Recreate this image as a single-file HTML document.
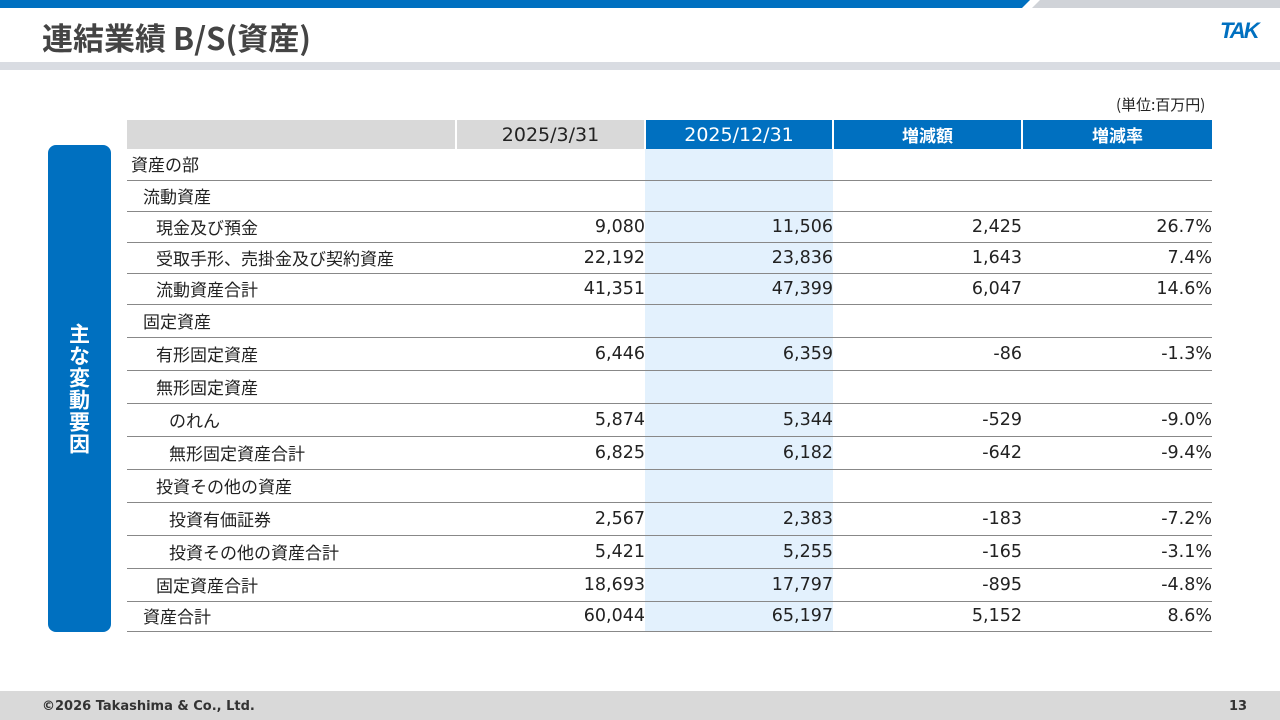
<!DOCTYPE html><html><head><meta charset="utf-8"><style>
body{margin:0;width:1280px;height:720px;position:relative;background:#fff;font-family:"DejaVu Sans","Noto Sans CJK JP",sans-serif;overflow:hidden;color:#222}
.abs{position:absolute}
table{position:absolute;left:127px;top:120px;border-collapse:collapse;width:1085px;font-size:17.5px}
td{padding:0;height:31px;border-bottom:1px solid #888;text-align:right;line-height:20px;white-space:nowrap;box-sizing:border-box}
td.l{text-align:left;font-family:"Noto Sans CJK JP",sans-serif;font-size:17px}
td.h{border-bottom:none;background:#d9d9d9;text-align:center;font-size:19px;height:29px}
td.b{background:#0070c0;color:#fff;text-align:center;font-size:17px;border-bottom:none;border-left:2px solid #fff;font-weight:bold;font-family:"Noto Sans CJK JP",sans-serif;height:29px}
td.c2{background:#e3f1fd}
tr.t td{height:33px}
tr.z td{height:30px}
</style></head><body>
<svg class="abs" style="left:0;top:0" width="1280" height="8"><polygon points="0,0 1030,0 1022,8 0,8" fill="#0070c0"/><polygon points="1032,8 1040,0 1280,0 1280,8" fill="#d0d3d8"/></svg>
<div class="abs" style="left:42px;top:16px;font-size:31px;font-weight:bold;color:#444;font-family:'Noto Sans CJK JP',sans-serif;line-height:42px">連結業績 B/S(資産)</div>
<div class="abs" style="left:1220px;top:18px;font-size:22px;font-style:italic;font-weight:bold;color:#0070c0;letter-spacing:-2px;font-family:'Liberation Sans',sans-serif">TAK</div>
<div class="abs" style="left:0;top:62px;width:1280px;height:8px;background:#d9dce2"></div>
<div class="abs" style="left:1116px;top:94px;font-size:15px;font-family:'Noto Sans CJK JP',sans-serif">(単位:百万円)</div>
<div class="abs" style="left:48px;top:145px;width:63px;height:487px;background:#0070c0;border-radius:8px;color:#fff;font-weight:bold;font-size:21px;writing-mode:vertical-rl;display:flex;align-items:center;justify-content:center;letter-spacing:1px;font-family:'Noto Sans CJK JP',sans-serif">主な変動要因</div>
<table>
<colgroup><col style="width:329px"><col style="width:189px"><col style="width:188px"><col style="width:189px"><col style="width:190px"></colgroup>
<tr><td class="h"></td><td class="h" style="border-left:2px solid #fff">2025/3/31</td><td class="b" style="font-size:19px;font-weight:normal;font-family:'DejaVu Sans',sans-serif">2025/12/31</td><td class="b">増減額</td><td class="b">増減率</td></tr>
<tr><td class="l" style="padding-left:4px">資産の部</td><td></td><td class="c2"></td><td></td><td></td></tr>
<tr><td class="l" style="padding-left:16px">流動資産</td><td></td><td class="c2"></td><td></td><td></td></tr>
<tr><td class="l" style="padding-left:29px">現金及び預金</td><td>9,080</td><td class="c2">11,506</td><td>2,425</td><td>26.7%</td></tr>
<tr><td class="l" style="padding-left:29px">受取手形、売掛金及び契約資産</td><td>22,192</td><td class="c2">23,836</td><td>1,643</td><td>7.4%</td></tr>
<tr><td class="l" style="padding-left:29px">流動資産合計</td><td>41,351</td><td class="c2">47,399</td><td>6,047</td><td>14.6%</td></tr>
<tr class="t"><td class="l" style="padding-left:16px">固定資産</td><td></td><td class="c2"></td><td></td><td></td></tr>
<tr class="t"><td class="l" style="padding-left:29px">有形固定資産</td><td>6,446</td><td class="c2">6,359</td><td>-86</td><td>-1.3%</td></tr>
<tr class="t"><td class="l" style="padding-left:29px">無形固定資産</td><td></td><td class="c2"></td><td></td><td></td></tr>
<tr class="t"><td class="l" style="padding-left:42px">のれん</td><td>5,874</td><td class="c2">5,344</td><td>-529</td><td>-9.0%</td></tr>
<tr class="t"><td class="l" style="padding-left:42px">無形固定資産合計</td><td>6,825</td><td class="c2">6,182</td><td>-642</td><td>-9.4%</td></tr>
<tr class="t"><td class="l" style="padding-left:29px">投資その他の資産</td><td></td><td class="c2"></td><td></td><td></td></tr>
<tr class="t"><td class="l" style="padding-left:42px">投資有価証券</td><td>2,567</td><td class="c2">2,383</td><td>-183</td><td>-7.2%</td></tr>
<tr class="t"><td class="l" style="padding-left:42px">投資その他の資産合計</td><td>5,421</td><td class="c2">5,255</td><td>-165</td><td>-3.1%</td></tr>
<tr class="t"><td class="l" style="padding-left:29px">固定資産合計</td><td>18,693</td><td class="c2">17,797</td><td>-895</td><td>-4.8%</td></tr>
<tr class="z"><td class="l" style="padding-left:16px">資産合計</td><td>60,044</td><td class="c2">65,197</td><td>5,152</td><td>8.6%</td></tr>
</table>
<div class="abs" style="left:0;top:691px;width:1280px;height:29px;background:#d9d9d9"></div>
<div class="abs" style="left:42px;top:699px;font-size:13px;font-weight:bold;color:#333">©2026 Takashima &amp; Co., Ltd.</div>
<div class="abs" style="left:1229px;top:699px;font-size:13px;font-weight:bold;color:#333">13</div>
</body></html>
